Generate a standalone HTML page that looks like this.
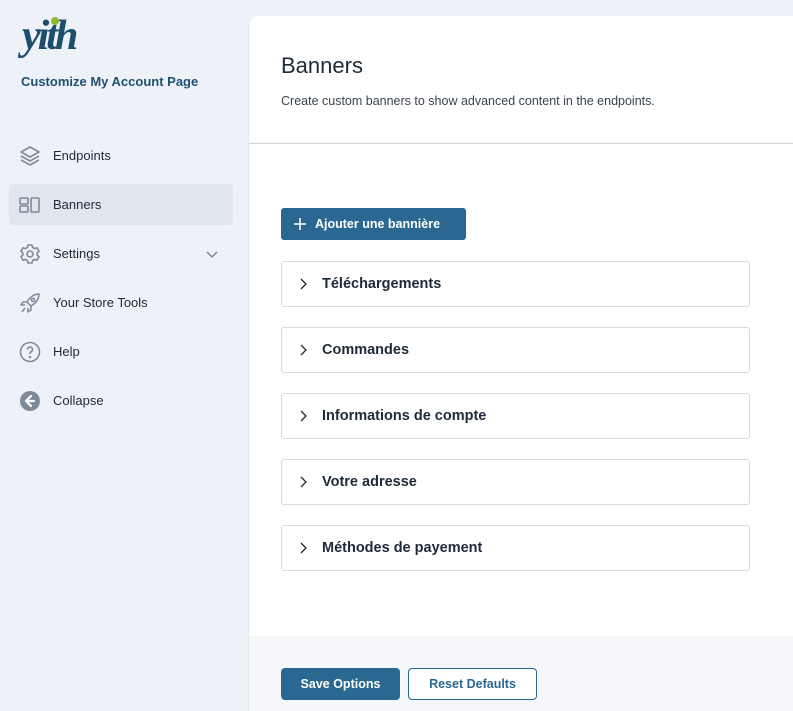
<!DOCTYPE html>
<html><head><meta charset="utf-8"><style>
*{box-sizing:border-box;margin:0;padding:0}
body{width:793px;height:711px;overflow:hidden;background:#eef2f8;font-family:"Liberation Sans",sans-serif;position:relative}
.side{position:absolute;left:0;top:0;width:249px;height:711px}
.logo{position:absolute;left:22px;top:12px;font-family:"Liberation Serif",serif;font-style:italic;font-weight:bold;font-size:42px;color:#1c4e6e;letter-spacing:-3px}
.dot{position:absolute;left:51px;top:17px;width:8px;height:8px;border-radius:50%;background:#8dbb2d}
.title{position:absolute;left:21px;top:74px;font-size:13px;font-weight:bold;color:#1f4f72}
.nav{position:absolute;left:9px;width:224px;height:41px;border-radius:4px;display:flex;align-items:center;font-size:13px;color:#1e2a38}
.nav svg{position:absolute;left:9px}
.nav span{position:absolute;left:44px}
.nav.act{background:#e0e6ee}
.main{position:absolute;left:248px;top:16px;width:545px;height:695px;background:#fff;border-top-left-radius:10px;border-left:1px solid #e4e8ee}
h1{position:absolute;left:32px;top:37px;font-size:22px;font-weight:normal;color:#1e2a38}
.desc{position:absolute;left:32px;top:78px;font-size:12.5px;color:#3a4450}
.hr{position:absolute;left:0;top:127px;width:545px;height:1px;background:#d0d4d9}
.btn{position:absolute;left:32px;top:192px;width:185px;height:32px;background:#2a6891;color:#fff;border-radius:3px;font-size:12.5px;font-weight:bold;display:flex;align-items:center}
.acc{position:absolute;left:32px;width:469px;height:46px;border:1px solid #d6d9dd;border-radius:3px;font-size:14.5px;font-weight:bold;color:#1e2a38;display:flex;align-items:center}
.acc span{position:absolute;left:40px}
.acc svg{position:absolute;left:16px}
.foot{position:absolute;left:0;top:620px;width:545px;height:75px;background:#f5f7fa}
.b2{position:absolute;top:32px;height:32px;border-radius:4px;font-size:12.5px;font-weight:bold;display:flex;align-items:center;justify-content:center}
</style></head><body>
<div class="side">
<div class="logo">yith</div><div class="dot"></div>
<div class="title">Customize My Account Page</div>
<div class="nav" style="top:135px"><svg width="24" height="24" viewBox="0 0 24 24" fill="none" stroke="#7f8a99" stroke-width="1.6" stroke-linejoin="round"><path d="M12 3 3 8l9 5 9-5z"/><path d="M3 12l9 5 9-5"/><path d="M3 16l9 5 9-5"/></svg><span>Endpoints</span></div>
<div class="nav act" style="top:184px"><svg width="24" height="24" viewBox="0 0 24 24" fill="none" stroke="#7f8a99" stroke-width="1.6"><rect x="2" y="5" width="8" height="6" rx="1"/><rect x="2" y="13" width="8" height="6" rx="1"/><rect x="13" y="5" width="8" height="14" rx="1"/></svg><span>Banners</span></div>
<div class="nav" style="top:233px"><svg width="24" height="24" viewBox="0 0 24 24" fill="none" stroke="#7f8a99" stroke-width="1.6"><circle cx="12" cy="12" r="3"/><path d="M10 3h4l.6 2.4 2 1.2 2.4-.8 2 3.4-1.8 1.8v2l1.8 1.8-2 3.4-2.4-.8-2 1.2L14 21h-4l-.6-2.4-2-1.2-2.4.8-2-3.4L4.8 13v-2L3 9.2l2-3.4 2.4.8 2-1.2z"/></svg><span>Settings</span><svg style="left:196px" width="14" height="14" viewBox="0 0 14 14" fill="none" stroke="#7f8a99" stroke-width="1.5"><path d="M2 5l5 5 5-5"/></svg></div>
<div class="nav" style="top:282px"><svg width="24" height="24" viewBox="0 0 24 24" fill="none" stroke="#7f8a99" stroke-width="1.5" stroke-linejoin="round"><path d="M21 3c-5 0-9 3-12 8l4 4c5-3 8-7 8-12z"/><circle cx="15" cy="9" r="1.6"/><path d="M9 11H5l-2 3 4 0M13 15v4l-3 2 0-4M7 17l-3 4"/></svg><span>Your Store Tools</span></div>
<div class="nav" style="top:331px"><svg width="24" height="24" viewBox="0 0 24 24" fill="none" stroke="#7f8a99" stroke-width="1.6"><circle cx="12" cy="12" r="9.5"/><path d="M9.5 9.5a2.5 2.5 0 1 1 3.5 2.3c-.7.4-1 .9-1 1.7v.5"/><circle cx="12" cy="17" r=".5" fill="#7f8a99"/></svg><span>Help</span></div>
<div class="nav" style="top:380px"><svg width="24" height="24" viewBox="0 0 24 24"><circle cx="12" cy="12" r="10" fill="#7f8a99"/><path d="M13 7l-5 5 5 5M8 12h8" stroke="#fff" stroke-width="2.2" fill="none" stroke-linecap="round" stroke-linejoin="round"/></svg><span>Collapse</span></div>
</div>
<div class="main">
<h1>Banners</h1>
<div class="desc">Create custom banners to show advanced content in the endpoints.</div>
<div class="hr"></div>
<div class="btn"><svg style="margin:0 8px 0 12px" width="14" height="14" viewBox="0 0 14 14" stroke="#fff" stroke-width="1.5"><path d="M7 1v12M1 7h12"/></svg>Ajouter une bannière</div>
<div class="acc" style="top:245px"><svg width="10" height="14" viewBox="0 0 10 14" fill="none" stroke="#1e2a38" stroke-width="1.3"><path d="M3 2l5 5-5 5"/></svg><span>Téléchargements</span></div>
<div class="acc" style="top:311px"><svg width="10" height="14" viewBox="0 0 10 14" fill="none" stroke="#1e2a38" stroke-width="1.3"><path d="M3 2l5 5-5 5"/></svg><span>Commandes</span></div>
<div class="acc" style="top:377px"><svg width="10" height="14" viewBox="0 0 10 14" fill="none" stroke="#1e2a38" stroke-width="1.3"><path d="M3 2l5 5-5 5"/></svg><span>Informations de compte</span></div>
<div class="acc" style="top:443px"><svg width="10" height="14" viewBox="0 0 10 14" fill="none" stroke="#1e2a38" stroke-width="1.3"><path d="M3 2l5 5-5 5"/></svg><span>Votre adresse</span></div>
<div class="acc" style="top:509px"><svg width="10" height="14" viewBox="0 0 10 14" fill="none" stroke="#1e2a38" stroke-width="1.3"><path d="M3 2l5 5-5 5"/></svg><span>Méthodes de payement</span></div>
<div class="foot">
<div class="b2" style="left:32px;width:119px;background:#2a6891;color:#fff">Save Options</div>
<div class="b2" style="left:159px;width:129px;border:1px solid #2a6891;color:#2a6891;background:#fff">Reset Defaults</div>
</div>
</div>
</body></html>
